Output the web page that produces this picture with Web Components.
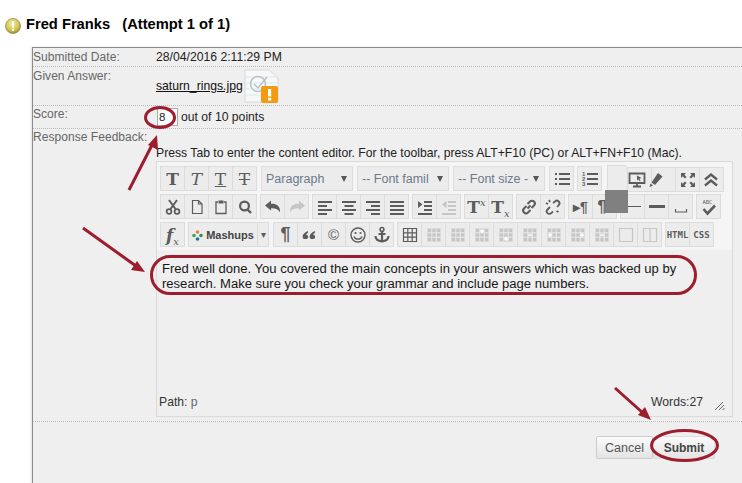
<!DOCTYPE html>
<html>
<head>
<meta charset="utf-8">
<title>Grade attempt</title>
<style>
html, body { margin: 0; padding: 0; background: #fff; height: 483px; overflow: hidden; }
body { font-family: "Liberation Sans", Arial, sans-serif; font-size: 12.2px; position: relative; }
</style>
</head>
<body>
<attempt-heading>Fred Franks &nbsp; (Attempt 1 of 1)</attempt-heading>
<grade-panel>
  <grade-row label="Submitted Date:" height="19">28/04/2016 2:11:29 PM</grade-row>
  <grade-row label="Given Answer:" height="39"><file-link name="saturn_rings.jpg"></file-link></grade-row>
  <grade-row label="Score:" height="23" pad="1"><score-input value="8" total="10"></score-input></grade-row>
  <grade-row label="Response Feedback:" height="293" pad="1">
    <div style="padding:16px 0 0;line-height:14px">Press Tab to enter the content editor. For the toolbar, press ALT+F10 (PC) or ALT+FN+F10 (Mac).</div>
    <feedback-editor path="p" words="27">
      <p style="margin:0;width:540px">Fred well done. You covered the main concepts in your answers which was backed up by research. Make sure you check your grammar and include page numbers.</p>
    </feedback-editor>
  </grade-row>
  <form-actions></form-actions>
</grade-panel>
<mark-up></mark-up>
<script>
// tiny helpers, all icons live in one map
const p = (d, extra = "") => `<path d="${d}" ${extra}/>`;
const stroke = (d, w = 1.5) => `<path d="${d}" fill="none" stroke="currentColor" stroke-width="${w}"/>`;
const cell = (mark = "") => `<path d="M2.500 2.500h13v13h-13z"/><path d="M2.500 6.800h13M2.500 11.200h13M6.800 2.500v13M11.200 2.500v13" stroke="#ececec" stroke-width="1"/>` + (mark ? `<path d="${mark}" fill="none" stroke="#fff" stroke-width="1.400"/>` : "");
const icons = {
  cut: stroke("M5 2l6.500 9M13 2l-6.500 9", 2) + `<circle cx="5" cy="13.500" r="2.400" fill="none" stroke="currentColor" stroke-width="1.700"/><circle cx="13" cy="13.500" r="2.400" fill="none" stroke="currentColor" stroke-width="1.700"/>`,
  doc: stroke("M4.500 2.500h6l3.500 3.500v9.500h-9.500zM10.500 2.500v3.500h3.500", 1.200),
  paste: stroke("M6 4H4v11.500h10V4h-2", 1.300) + p("M6.500 2.500h5V5.500h-5z"),
  find: `<circle cx="8.500" cy="8" r="4.400" fill="none" stroke="currentColor" stroke-width="2.200"/>` + stroke("M11.500 11.500l3.500 3.500", 2.400),
  undo: p("M1 7.500l6-5v3.300c5.500-.3 9.500 2.200 9 8.700-1.500-3.500-4.500-4.500-9-4.300v2.300z"),
  redo: p("M17 7.500l-6-5v3.300c-5.500-.3-9.500 2.200-9 8.700 1.500-3.500 4.500-4.500 9-4.300v2.300z"),
  left: p("M2 3h14v2H2zM2 7h9v2H2zM2 11h14v2H2zM2 15h9v2H2z"),
  center: p("M2 3h14v2H2zM4.500 7h9v2h-9zM2 11h14v2H2zM4.500 15h9v2h-9z"),
  right: p("M2 3h14v2H2zM7 7h9v2H7zM2 11h14v2H2zM7 15h9v2H7z"),
  justify: p("M2 3h14v2H2zM2 7h14v2H2zM2 11h14v2H2zM2 15h14v2H2z"),
  indent: p("M8 3h8v2H8zM8 7h8v2H8zM8 11h8v2H8zM2 15h14v2H2zM2 3l4.500 3.500L2 10z"),
  outdent: p("M8 3h8v2H8zM8 7h8v2H8zM8 11h8v2H8zM2 15h14v2H2zM6.500 3L2 6.500 6.500 10z"),
  bullets: p("M6 3h11v2H6zM6 8h11v2H6zM6 13h11v2H6zM2 3h2v2H2zM2 8h2v2H2zM2 13h2v2H2z"),
  numbers: p("M6 3h11v2H6zM6 8h11v2H6zM6 13h11v2H6z") + `<g font-family="Liberation Sans" font-weight="bold" font-size="6"><text x="1" y="6">1</text><text x="1" y="11">2</text><text x="1" y="16">3</text></g>`,
  link: stroke("M7.500 10.500l3-3M6.500 8l-2.500 2.500a2.800 2.800 0 0 0 4 4L10.500 12M11.500 10l2.500-2.500a2.800 2.800 0 0 0-4-4L7.500 6", 2),
  unlink: stroke("M6 9l-2.500 2.500a2.600 2.600 0 0 0 3.700 3.700L9 13.500M9 5l2-1.500a2.600 2.600 0 0 1 3.700 3.700L13.200 9M2 5l2 1M5 2l1 2M12.500 13l2 1", 1.800),
  hr: p("M1 8h16v1H1z"),
  hrthick: p("M1 7h16v3H1z"),
  nbsp: stroke("M3.500 11v3h11v-3", 1.200),
  quote: p("M3 13c-2-1-2.500-5 3.500-8l.8 1.200C5.500 7.500 5 8.500 5.500 9c2-.3 2.500 3.500 0 4zM10 13c-2-1-2.500-5 3.500-8l.8 1.200c-1.800 1.300-2.300 2.300-1.800 2.800 2-.3 2.500 3.500 0 4z"),
  smile: `<circle cx="9" cy="9" r="7" fill="none" stroke="currentColor" stroke-width="1.400"/><circle cx="6.500" cy="7" r="1.100"/><circle cx="11.500" cy="7" r="1.100"/>` + stroke("M5 10.500c1 3.500 7 3.500 8 0", 1.300),
  anchor: `<circle cx="9" cy="3.500" r="1.900" fill="none" stroke="currentColor" stroke-width="1.500"/>` + stroke("M9 5.500v10M5.500 8h7M2.500 10c0 3.500 3 5 6.500 5.500 3.500-.5 6.500-2 6.500-5.500", 2.200),
  table: stroke("M2.500 2.500h13v13h-13zM2.500 6.800h13M2.500 11.200h13M6.800 2.500v13M11.200 2.500v13", 1.200),
  cell0: cell(),
  cellTop: cell("M9 3v4M7 5h4"),
  cellBottom: cell("M9 11v4M7 13h4"),
  cellMinus: cell("M7 9h4"),
  cellLeft: cell("M5 7v4M3 9h4"),
  cellRight: cell("M13 7v4M11 9h4"),
  empty: stroke("M2.500 2.500h13v13h-13z", 1.200),
  split: stroke("M2.500 2.500h13v13h-13zM9 2.500v13", 1.200),
  preview: stroke("M1.500 2.500h15v9.500h-15zM9 12v3M5 15.500h8", 1.800) + p("M9 4.500l4.500 2.500-2 .8 1 2-1 .5-1-2-1.500 1.200z"),
  marker: p("M11 2l4.500 3.500-7.500 8.500-3.500-2.500zM3.500 12.500l2.500 2-3.500 1.500z"),
  full: p("M2 2h5L5.300 3.700 7.500 6 6 7.500 3.700 5.300 2 7zM16 2v5l-1.700-1.700L12 7.500 10.500 6l2.200-2.300L11 2zM2 16v-5l1.700 1.700L6 10.500 7.500 12l-2.200 2.300L7 16zM16 16h-5l1.700-1.700L10.500 12l1.500-1.500 2.300 2.200L16 11z"),
  collapse: stroke("M3 8.500l6-5 6 5M3 14.500l6-5 6 5", 2.300),
  spell: `<text x="2.500" y="6" font-family="DejaVu Sans Mono" font-size="5.500">ABC</text>` + stroke("M3.500 11l4 4.500 7.500-8", 2.600)
};

class AttemptHeading extends HTMLElement {
  constructor() {
    super();
    this.attachShadow({ mode: "open" }).innerHTML = `<style>
      :host { display: flex; align-items: center; gap: 5px; height: 47px; padding: 0 0 0 5px; box-sizing: border-box; font: bold 14.700px "Liberation Sans", Arial, sans-serif; color: #000; white-space: pre; }
      svg { flex: none; margin-top: 5px; }
    </style>
    <svg width="16" height="16" viewBox="0 0 16 16">
      <defs><radialGradient id="g" cx=".45" cy=".35" r=".7"><stop offset="0" stop-color="#f6eda0"/><stop offset=".6" stop-color="#d6c653"/><stop offset="1" stop-color="#8f8425"/></radialGradient></defs>
      <circle cx="8" cy="8" r="7.500" fill="url(#g)" stroke="#8e8b55" stroke-width=".8"/>
      <rect x="7" y="3.500" width="2" height="6.500" fill="#fff"/><rect x="7" y="11" width="2" height="2" fill="#fff"/>
    </svg><span><slot></slot></span>`;
  }
}

class GradePanel extends HTMLElement {
  constructor() {
    super();
    this.attachShadow({ mode: "open" }).innerHTML = `<style>
      :host { display: block; margin-left: 32px; height: 436px; box-sizing: border-box; background: #efefef; border: solid #8c8c8c; border-width: 1px 0 0 1px; box-shadow: -1px 0 2px rgba(0,0,0,.12); color: #222; }
    </style><slot></slot>`;
  }
}

class GradeRow extends HTMLElement {
  constructor() {
    super();
    const h = this.getAttribute("height");
    const pad = this.getAttribute("pad") || 2;
    this.attachShadow({ mode: "open" }).innerHTML = `<style>
      :host { display: grid; grid-template-columns: 123px 1fr; height: ${h}px; box-sizing: border-box; border-bottom: 1px dotted #bbb; line-height: 14px; padding-top: ${pad}px; }
      .label { color: #666; font-size: 12px; letter-spacing: .05px; white-space: nowrap; }
      .value { min-width: 0; color: #222; }
    </style><div class="label">${this.getAttribute("label")}</div><div class="value"><slot></slot></div>`;
  }
}

class FileLink extends HTMLElement {
  constructor() {
    super();
    this.attachShadow({ mode: "open" }).innerHTML = `<style>
      :host { display: flex; align-items: flex-start; }
      a { color: #111; text-decoration: underline; margin-top: 10px; margin-right: 1px; }
      svg { display: block; }
    </style><a>${this.getAttribute("name")}</a>
    <svg width="35" height="34" viewBox="0 0 35 34">
      <path d="M1 1h24l9 8v24H1z" fill="#f8f8f8" stroke="#d8d8d8"/>
      <path d="M1 8h33M1 14h33M1 20h33M1 26h33" stroke="#d5e9f3"/>
      <circle cx="14" cy="15" r="7.500" fill="none" stroke="#b9c2c8" stroke-width="1.500"/>
      <path d="M10 15l4 4 9-11" fill="none" stroke="#b9c2c8" stroke-width="1.500"/>
      <rect x="17" y="17" width="17" height="17" rx="2" fill="#f49a10"/>
      <rect x="24" y="20" width="3.200" height="7.500" fill="#fff"/><rect x="24" y="28.800" width="3.200" height="2.800" fill="#fff"/>
    </svg>`;
  }
}

class ScoreInput extends HTMLElement {
  constructor() {
    super();
    this.attachShadow({ mode: "open" }).innerHTML = `<style>
      :host { display: flex; align-items: center; gap: 3px; margin: 1px 0 0 1px; }
      .box { width: 21px; height: 18px; box-sizing: border-box; border: 1px solid #aaa; background: #fff; font-size: 11.500px; line-height: 17px; padding-left: 1px; color: #222; }
    </style><div class="box">${this.getAttribute("value")}</div><span>out of ${this.getAttribute("total")} points</span>`;
  }
}

class ToolGroup extends HTMLElement {
  constructor() {
    super();
    this.attachShadow({ mode: "open" }).innerHTML = `<style>
      :host { display: flex; flex: none; box-sizing: border-box; height: 25px; border: solid #dcdcdc; border-width: 1px 0 1px 1px; background: #ececec; }
      ::slotted(*) { border-right: 1px solid #dcdcdc; }
    </style><slot></slot>`;
  }
}

class ToolButton extends HTMLElement {
  constructor() {
    super();
    const name = this.getAttribute("icon");
    const glyph = this.getAttribute("glyph");
    const faded = this.hasAttribute("faded");
    const w = this.getAttribute("w") || 24;
    const dx = this.getAttribute("dx") || 0;
    const body = name
      ? `<svg class="ico" width="18" height="18" viewBox="0 0 18 18" fill="currentColor" style="margin-left:${dx}px">${icons[name]}</svg>`
      : `<span style="${this.getAttribute("css") || ""}">${glyph}</span>`;
    this.attachShadow({ mode: "open" }).innerHTML = `<style>
      :host { display: flex; align-items: center; justify-content: center; box-sizing: border-box; width: ${w}px; height: 23px; color: ${faded ? "#c6c6c6" : "#5c5c5c"}; white-space: nowrap; }
      sup, sub { font: italic 10px "DejaVu Serif", serif; line-height: 0; }
      .ico { display: block; flex: none; }
    </style>${body}`;
  }
}

class ToolSelect extends HTMLElement {
  constructor() {
    super();
    const w = this.getAttribute("w");
    this.attachShadow({ mode: "open" }).innerHTML = `<style>
      :host { display: flex; flex: none; align-items: center; box-sizing: border-box; width: ${w}px; height: 25px; margin-left: 1px; border: 1px solid #dcdcdc; background: #ececec; color: #6d7a8c; font-size: 12.500px; padding-left: 4px; }
      span { flex: 1; white-space: nowrap; }
      i { width: 0; height: 0; border: 3.500px solid transparent; border-top: 6px solid #555; border-bottom: 0; margin: 0 5px 0 0; flex: none; }
    </style><span>${this.getAttribute("label")}</span><i></i>`;
  }
}

class ToolRow extends HTMLElement {
  constructor() {
    super();
    this.attachShadow({ mode: "open" }).innerHTML = `<style>
      :host { display: flex; gap: 3px; height: 25px; }
    </style><slot></slot>`;
  }
}

class FeedbackEditor extends HTMLElement {
  constructor() {
    super();
    const B = (icon, extra = "") => `<tool-button icon="${icon}" ${extra}></tool-button>`;
    const T = (glyph, css, extra = "") => `<tool-button glyph="${glyph}" css="${css}" ${extra}></tool-button>`;
    const serif = "font:bold 17px 'DejaVu Serif',serif;";
    const mono = "font:bold 9px 'DejaVu Sans Mono',monospace;";
    const dots = "<svg width='11' height='11' viewBox='0 0 11 11' style='vertical-align:-2px;margin-right:3px'><circle cx='5.500' cy='2' r='1.800' fill='#e8812a'/><circle cx='9' cy='5.500' r='1.800' fill='#2a8f6a'/><circle cx='5.500' cy='9' r='1.800' fill='#1f6fa8'/><circle cx='2' cy='5.500' r='1.800' fill='#3aa655'/></svg>";
    const faded = ["cell0", "cellTop", "cellBottom", "cellMinus", "cellLeft", "cellRight", "cellMinus"];
    this.attachShadow({ mode: "open" }).innerHTML = `<style>
      :host { display: flex; flex-direction: column; box-sizing: border-box; width: 577px; height: 256px; margin-top: 1px; border: 1px solid #d9d9d9; background: #efefef; }
      .bar { display: flex; flex-direction: column; gap: 3px; background: #f5f5f5; padding: 4px 0 5px 3px; height: 88px; box-sizing: border-box; flex: none; }
      .body { flex: 1; padding: 11px 5px 0 5px; font-size: 13.050px; line-height: 15px; color: #161616; }
      .foot { display: flex; justify-content: space-between; align-items: flex-end; padding: 0 2px 7px 2px; line-height: 14px; color: #333; position: relative; }
      .foot b { font-weight: normal; color: #667; }
      .words { margin-right: 27px; }
      .grip { position: absolute; right: 7px; bottom: 6px; }
    </style>
    <div class="bar">
      <tool-row>
        <tool-group>${T("T", serif)}${T("T", serif + "font-style:italic;font-weight:normal;")}${T("T", serif + "font-weight:normal;text-decoration:underline;")}${T("T", serif + "font-weight:normal;text-decoration:line-through;")}</tool-group>
        <tool-select w="92" label="Paragraph"></tool-select>
        <tool-select w="92" label="-- Font famil"></tool-select>
        <tool-select w="92" label="-- Font size -"></tool-select>
        <tool-group style="margin-left:1px">${B("bullets")}</tool-group>
        <tool-group>${B("numbers")}</tool-group>
        <tool-group style="margin-left:2px;margin-right:-3px;width:20px;height:26px;margin-top:-1px"></tool-group>
        <tool-group style="margin-top:1px">${B("preview", 'dx="-6"')}${B("marker", 'dx="-16"')}${B("full")}${B("collapse", 'dx="-2"')}</tool-group>
      </tool-row>
      <tool-row>
        <tool-group>${B("cut")}${B("doc")}${B("paste")}${B("find")}</tool-group>
        <tool-group>${B("undo")}${B("redo", "faded")}</tool-group>
        <tool-group>${B("left")}${B("center")}${B("right")}${B("justify")}</tool-group>
        <tool-group>${B("indent")}${B("outdent", "faded")}</tool-group>
        <tool-group>${T("T<sup>x</sup>", serif)}${T("T<sub>x</sub>", serif)}</tool-group>
        <tool-group>${B("link")}${B("unlink")}</tool-group>
        <tool-group>${T("▸¶", "font:bold 14px 'Liberation Sans';")}${T("¶", "font:bold 16px 'Liberation Sans';margin-right:5px;")}</tool-group>
        <tool-group>${B("hr")}${B("hrthick")}${B("nbsp")}</tool-group>
        <tool-group>${B("spell")}</tool-group>
      </tool-row>
      <tool-row>
        <tool-group>${T("f<sub>x</sub>", "font:italic bold 17px 'DejaVu Serif',serif;")}</tool-group>
        <tool-group>
          <tool-button w="69" glyph="${dots}Mashups" css="font:bold 11px 'Liberation Sans';color:#444;"></tool-button>
          <tool-button w="11" glyph="&#9662;" css="font-size:10px;"></tool-button>
        </tool-group>
        <tool-group style="margin-left:1px">${T("¶", "font:bold 18px 'Liberation Sans';")}${B("quote")}${T("©", "font:15px 'Liberation Sans';")}${B("smile")}${B("anchor")}</tool-group>
        <tool-group>${B("table")}${B("cell0", "faded")}${faded.map(f => B(f, "faded")).join("")}${B("empty", "faded")}${B("split", "faded")}</tool-group>
        <tool-group>${T("HTML", mono)}${T("CSS", mono)}</tool-group>
      </tool-row>
    </div>
    <div class="body"><slot></slot></div>
    <div class="foot"><span>Path: <b>${this.getAttribute("path")}</b></span><span class="words">Words:${this.getAttribute("words")}</span>
      <svg class="grip" width="11" height="9" viewBox="0 0 11 9"><path d="M1 9l8-8M5 9l5-5M8.500 9l2-2" stroke="#666"/></svg>
    </div>`;
  }
}

class FormActions extends HTMLElement {
  constructor() {
    super();
    this.attachShadow({ mode: "open" }).innerHTML = `<style>
      :host { display: flex; justify-content: flex-end; padding: 14px 27px 0 0; }
      button { height: 23px; box-sizing: border-box; font: 12.500px "Liberation Sans", sans-serif; color: #555; border: 1px solid #ccc; background: linear-gradient(#fafafa, #e4e4e4); border-radius: 2px; padding: 0; }
      .cancel { width: 57px; }
      .submit { width: 62px; font-size: 12px; font-weight: bold; color: #444; border-color: #ddd; }
    </style><button class="cancel">Cancel</button><button class="submit">Submit</button>`;
  }
}

// red hand-drawn annotations and the stray grey box lie over the page
class MarkUp extends HTMLElement {
  constructor() {
    super();
    const c = "#9d1c2d";
    const arrow = (x1, y1, x2, y2, hx) => `<path d="M${x1} ${y1}L${x2} ${y2}" stroke="${c}" stroke-width="3"/><path d="${hx}" fill="${c}"/>`;
    this.attachShadow({ mode: "open" }).innerHTML = `<style>
      :host { position: absolute; inset: 0; pointer-events: none; }
      svg { position: absolute; left: 0; top: 0; }
      .box { position: absolute; left: 605px; top: 190px; width: 23px; height: 23px; background: #808080; }
    </style>
    <div class="box"></div>
    <svg width="742" height="483" fill="none">
      <ellipse cx="160" cy="117.500" rx="14.500" ry="10" stroke="${c}" stroke-width="3"/>
      <rect x="151.500" y="256.500" width="544" height="37" rx="18.500" stroke="${c}" stroke-width="3"/>
      <ellipse cx="684.500" cy="445.500" rx="33" ry="15" stroke="${c}" stroke-width="3"/>
      ${arrow(129, 190, 152, 145, "M157 135l1 15-10-5z")}
      ${arrow(83, 228, 136, 266, "M145 272l-14-2 6-9z")}
      ${arrow(615, 388, 643, 413, "M651 420l-13-5 7-8z")}
    </svg>`;
  }
}

customElements.define("attempt-heading", AttemptHeading);
customElements.define("grade-panel", GradePanel);
customElements.define("grade-row", GradeRow);
customElements.define("file-link", FileLink);
customElements.define("score-input", ScoreInput);
customElements.define("tool-group", ToolGroup);
customElements.define("tool-button", ToolButton);
customElements.define("tool-select", ToolSelect);
customElements.define("tool-row", ToolRow);
customElements.define("feedback-editor", FeedbackEditor);
customElements.define("form-actions", FormActions);
customElements.define("mark-up", MarkUp);
</script>
</body>
</html>
